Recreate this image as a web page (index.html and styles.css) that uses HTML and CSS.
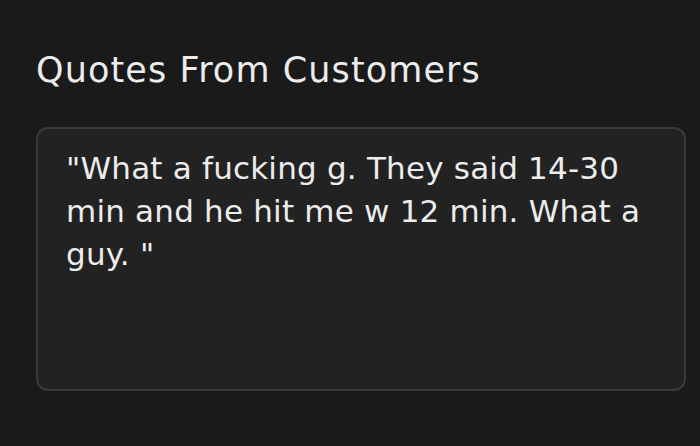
FILE: index.html
```html
<!DOCTYPE html>
<html>
<head>
<meta charset="utf-8">
<link rel="stylesheet" href="styles.css">
</head>
<body>
<main class="page">
  <h1 class="title">Quotes From Customers</h1>
  <section class="card">
    <p class="quote">"What a fucking g. They said 14-30 min and he hit me w 12 min. What a guy. "</p>
  </section>
</main>
</body>
</html>
```
FILE: styles.css
```css
html, body {
  margin: 0;
  padding: 0;
  background: #1a1a1a;
}
.page {
  width: 700px;
  height: 446px;
  box-sizing: border-box;
  padding: 48px 14px 0 36px;
  font-family: "DejaVu Sans", sans-serif;
  color: #ececec;
}
.title {
  margin: 0;
  font-size: 35px;
  font-weight: 400;
  line-height: 44px;
  letter-spacing: 1.1px;
}
.card {
  margin-top: 35px;
  height: 264px;
  box-sizing: border-box;
  border: 2px solid #3a3a3a;
  border-radius: 12px;
  background: #222222;
  padding: 18px 28px;
}
.quote {
  margin: 0;
  font-size: 31px;
  line-height: 43px;
  letter-spacing: 0.2px;
  width: 575px;
}
```
